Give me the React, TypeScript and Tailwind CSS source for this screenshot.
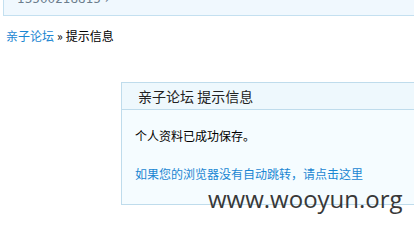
export default function App() {
  return (
    <div className="relative h-[237px] w-[414px] overflow-hidden bg-white font-['Noto_Sans_CJK_SC',sans-serif] text-[12px] leading-[16px]">
      {/* Previous panel, cut off at the top */}
      <div className="h-[16px] overflow-hidden pl-[3px]">
        <div className="-mt-[14px] h-[30px] w-[440px] border border-[#c4e0f0] bg-[#f0f8fe] pl-[13px] pt-[4px] font-['DejaVu_Sans',sans-serif] text-[12px] text-[#6b7d8d]">
          13500218815 ›
        </div>
      </div>

      {/* Breadcrumb */}
      <div className="mt-[12px] flex items-center gap-[3px] pl-[6px]">
        <a className="text-[#1a86d2]">亲子论坛</a>
        <span className="text-[12px] text-black">»</span>
        <span className="text-black">提示信息</span>
      </div>

      {/* Message box */}
      <div className="ml-[121px] mt-[38px] w-[400px] border border-[#bfdcec] bg-[#f5fcff]">
        <div className="flex h-[27px] items-center border-b border-[#bfdcec] bg-[#eef8fd] pl-[16px] text-[14px] text-[#222]">
          亲子论坛 提示信息
        </div>
        <div className="px-[13px] pb-[22px] pt-[18px]">
          <p className="text-black">个人资料已成功保存。</p>
          <a className="mt-[22px] block text-[#1a86d2]">如果您的浏览器没有自动跳转，请点击这里</a>
        </div>
      </div>

      {/* Watermark */}
      <div className="absolute left-[208px] top-[191px] font-['Open_Sans',sans-serif] text-[24px] text-[#383838]">
        www.wooyun.org
      </div>
    </div>
  );
}
